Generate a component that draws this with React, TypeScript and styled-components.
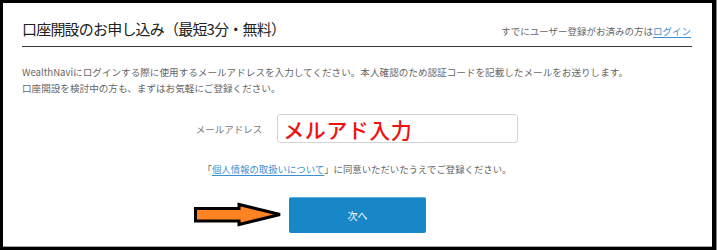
import styled, { createGlobalStyle } from 'styled-components';

const GlobalStyle = createGlobalStyle`
  html, body {
    margin: 0;
    padding: 0;
    background: #fff;
  }
  body {
    font-family: "Noto Sans CJK JP", "Noto Sans", sans-serif;
    color: #333;
  }
`;

function Arrow() {
  return (
    <ArrowMark width="92" height="27" viewBox="0 0 92 27">
      <polygon
        points="3.5,7.5 47,7.5 47,3.5 88,13.5 47,23.5 47,20 3.5,20"
        fill="#ff8322"
        stroke="#000"
        strokeWidth="3"
        strokeLinejoin="miter"
      />
    </ArrowMark>
  );
}

export default function App() {
  return (
    <>
      <GlobalStyle />
      <Outer>
        <Frame>
          <Panel>
            <Header>
              <Title>口座開設のお申し込み（最短3分・無料）</Title>
              <LoginNote>
                すでにユーザー登録がお済みの方は<TextLink href="#">ログイン</TextLink>
              </LoginNote>
            </Header>

            <Lead>
              WealthNaviにログインする際に使用するメールアドレスを入力してください。本人確認のため認証コードを記載したメールをお送りします。
              <br />
              口座開設を検討中の方も、まずはお気軽にご登録ください。
            </Lead>

            <FieldRow>
              <Label>メールアドレス</Label>
              <Field>メルアド入力</Field>
            </FieldRow>

            <Consent>
              「<TextLink href="#">個人情報の取扱いについて</TextLink>」に同意いただいたうえでご登録ください。
            </Consent>

            <Actions>
              <ButtonWrap>
                <Arrow />
                <NextBtn type="button">次へ</NextBtn>
              </ButtonWrap>
            </Actions>
          </Panel>
        </Frame>
      </Outer>
    </>
  );
}

const Outer = styled.div`
  width: 717px;
  height: 250px;
  box-sizing: border-box;
  border-right: 1px solid #8a8a8a;
  background: #fff;
`;

const Frame = styled.div`
  width: 716px;
  height: 250px;
  box-sizing: border-box;
  border: 3px solid #000;
  border-right-width: 4px;
`;

const Panel = styled.div`
  height: 100%;
  box-sizing: border-box;
  padding: 0 20px 0 19px;
  border-bottom: 1px solid #a8a8a8;
  display: flex;
  flex-direction: column;
`;

const Header = styled.div`
  display: flex;
  justify-content: space-between;
  align-items: baseline;
  padding: 16px 0 7px;
  border-bottom: 1px solid #3a3a3a;
`;

const Title = styled.h1`
  margin: 0;
  font-size: 15px;
  line-height: 20px;
  font-weight: 400;
  color: #222;
  letter-spacing: -0.8px;
`;

const LoginNote = styled.span`
  font-size: 9.5px;
  line-height: 14px;
  color: #666;
  padding-right: 1px;
`;

const TextLink = styled.a`
  color: #3b8fd0;
  text-decoration: underline;
  text-underline-offset: 2px;
`;

const Lead = styled.p`
  margin: 17px 0 0;
  font-size: 9.6px;
  line-height: 16px;
  color: #666;
`;

const FieldRow = styled.div`
  display: flex;
  justify-content: center;
  align-items: center;
  gap: 15px;
  margin-top: 18px;
`;

const Label = styled.span`
  font-size: 9.5px;
  color: #777;
`;

const Field = styled.div`
  width: 241px;
  height: 29px;
  box-sizing: border-box;
  border: 1px solid #d4d4d4;
  border-radius: 3px;
  padding: 0 5px;
  display: flex;
  align-items: center;
  font-size: 21px;
  font-weight: 500;
  color: #ee1111;
  letter-spacing: 0.5px;
`;

const Consent = styled.p`
  margin: 19px 0 0;
  text-align: center;
  font-size: 9.4px;
  line-height: 14px;
  color: #666;
`;

const Actions = styled.div`
  display: flex;
  justify-content: center;
  margin-top: 21px;
`;

const ButtonWrap = styled.div`
  position: relative;
  padding-left: 1px;
`;

const ArrowMark = styled.svg`
  position: absolute;
  right: calc(100% + 4px);
  top: 4px;
  display: block;
`;

const NextBtn = styled.button`
  width: 137px;
  height: 36px;
  border: none;
  border-top: 1px solid #5aaee0;
  border-radius: 2px;
  background: #1787c8;
  color: #fff;
  font-family: "Noto Sans CJK JP", "Noto Sans", sans-serif;
  font-size: 10px;
  cursor: pointer;
`;
